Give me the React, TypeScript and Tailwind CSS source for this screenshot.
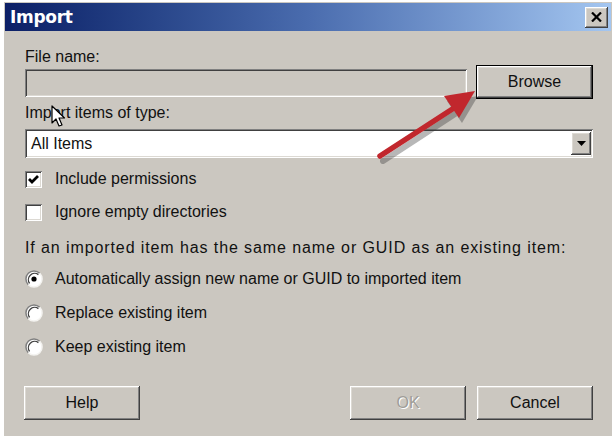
import React from 'react';

const raised =
  'shadow-[inset_-1px_-1px_#404040,inset_1px_1px_#ffffff,inset_-2px_-2px_#808080,inset_2px_2px_#dcd9d3]';
const sunken =
  'shadow-[inset_1px_1px_#808080,inset_-1px_-1px_#ffffff,inset_2px_2px_#404040,inset_-2px_-2px_#dcd9d3]';

const Button: React.FC<{ label: string; disabled?: boolean; isDefault?: boolean; className?: string }> = ({
  label,
  disabled,
  isDefault,
  className = '',
}) => (
  <div
    className={`flex items-center justify-center bg-[#cbc7c0] ${raised} ${
      isDefault ? 'outline outline-1 outline-black' : ''
    } ${className}`}
  >
    <span className={disabled ? 'text-[#a09d98] [text-shadow:1px_1px_#ffffff]' : 'text-[#101010]'}>{label}</span>
  </div>
);

const Checkbox: React.FC<{ checked?: boolean; label: string }> = ({ checked, label }) => (
  <div className="flex items-center h-[24px]">
    <div className={`w-[17px] h-[17px] bg-white ${sunken} flex items-center justify-center`}>
      {checked && (
        <svg width="11" height="11" viewBox="0 0 11 11">
          <path d="M1 5 L4 8 L10 2" stroke="#000" strokeWidth="2.8" fill="none" />
        </svg>
      )}
    </div>
    <span className="ml-[13px]">{label}</span>
  </div>
);

const Radio: React.FC<{ checked?: boolean; label: string }> = ({ checked, label }) => (
  <div className="flex items-center h-[24px]">
    <svg width="18" height="18" viewBox="0 0 18 18">
      <circle cx="9" cy="9" r="8" fill="#ffffff" />
      <path d="M3.3 14.7 A8 8 0 0 1 14.7 3.3" stroke="#808080" strokeWidth="1.5" fill="none" />
      <path d="M4.6 13.4 A6.3 6.3 0 0 1 13.4 4.6" stroke="#404040" strokeWidth="1.3" fill="none" />
      <path d="M14.7 3.3 A8 8 0 0 1 3.3 14.7" stroke="#f4f3f0" strokeWidth="1.5" fill="none" />
      {checked && <circle cx="9" cy="9" r="2.6" fill="#000" />}
    </svg>
    <span className="ml-[12px]">{label}</span>
  </div>
);

export default function App() {
  return (
    <div className="w-[616px] h-[440px] bg-white pt-[2px] pl-[4px] font-['Liberation_Sans',Arial,sans-serif] text-[16px] leading-[18px] text-[#111]">
      <div className="relative w-[608px] h-[434px] bg-[#cbc7c0] flex flex-col">
        {/* Title bar */}
        <div className="mx-[1px] mt-[1px] h-[28px] flex items-center justify-between bg-gradient-to-r from-[#0c1f66] via-[#4a6cae] to-[#a4c6f0]">
          <span className="pl-[5px] text-white font-bold text-[17px] font-['DejaVu_Sans',Verdana,sans-serif] tracking-[-0.3px]">
            Import
          </span>
          <div className={`mr-[3px] w-[23px] h-[21px] bg-[#cbc7c0] ${raised} flex items-center justify-center`}>
            <svg width="11" height="10" viewBox="0 0 11 10">
              <path d="M1 0.5 L10 9.5 M10 0.5 L1 9.5" stroke="#000" strokeWidth="2.2" />
            </svg>
          </div>
        </div>

        {/* Body */}
        <div className="pl-[21px] pr-[19px] flex flex-col">
          <div className="mt-[17px] h-[18px]">File name:</div>
          <div className="-mt-[1px] flex items-center justify-between h-[34px]">
            <div className={`w-[442px] h-[28px] bg-[#cbc7c0] ${sunken} mt-[2px]`} />
            <Button label="Browse" isDefault className="w-[115px] h-[32px] mr-[1px]" />
          </div>
          <div className="mt-[5px] h-[18px]">Import items of type:</div>
          <div className={`mt-[7px] w-[568px] h-[29px] bg-white ${sunken} flex items-center justify-between pl-[6px] pr-[2px]`}>
            <span>All Items</span>
            <div className={`w-[20px] h-[23px] bg-[#cbc7c0] ${raised} flex items-center justify-center`}>
              <svg width="9" height="5" viewBox="0 0 9 5">
                <path d="M0 0 H9 L4.5 5 Z" fill="#000" />
              </svg>
            </div>
          </div>

          <div className="mt-[9px]">
            <Checkbox checked label="Include permissions" />
          </div>
          <div className="mt-[9px]">
            <Checkbox label="Ignore empty directories" />
          </div>

          <div className="mt-[15px] h-[18px] tracking-[0.9px]">
            If an imported item has the same name or GUID as an existing item:
          </div>

          <div className="mt-[10px]">
            <Radio checked label="Automatically assign new name or GUID to imported item" />
          </div>
          <div className="mt-[10px]">
            <Radio label="Replace existing item" />
          </div>
          <div className="mt-[10px]">
            <Radio label="Keep existing item" />
          </div>

          <div className="mt-[27px] flex items-center">
            <Button label="Help" className="w-[116px] h-[34px] -ml-[1px]" />
            <div className="flex-1" />
            <Button label="OK" disabled className="w-[116px] h-[34px]" />
            <Button label="Cancel" className="w-[116px] h-[34px] ml-[11px]" />
          </div>
        </div>

        {/* Mouse cursor */}
        <svg className="absolute left-[47px] top-[103px]" width="16" height="24" viewBox="0 0 16 24">
          <path
            d="M1 1 L1 18 L5 14 L8 21 L11 20 L8 13 L13.5 13 Z"
            fill="#ffffff"
            stroke="#000"
            strokeWidth="1.2"
            strokeLinejoin="round"
          />
        </svg>

        {/* Red arrow annotation */}
        <svg className="absolute left-[360px] top-[80px]" width="130" height="90" viewBox="0 0 130 90">
          <g opacity="0.35" transform="translate(3,5)">
            <path d="M16 74 L88 27" stroke="#333" strokeWidth="6" strokeLinecap="round" />
            <path d="M111 9 L80 14 L95 36 Z" fill="#333" />
          </g>
          <path d="M16 74 L90 26" stroke="#c1272d" strokeWidth="5.5" strokeLinecap="round" />
          <path d="M111 9 L80 14 L95 36 Z" fill="#c1272d" />
        </svg>
      </div>
    </div>
  );
}
